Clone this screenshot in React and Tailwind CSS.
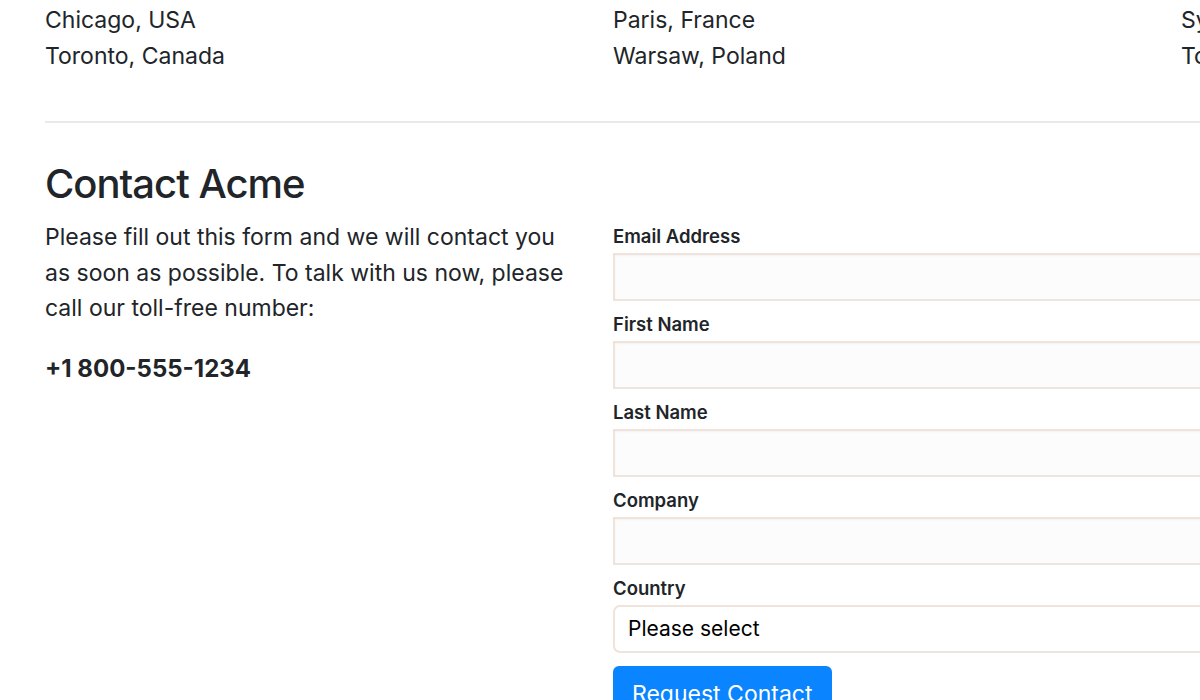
const offices = [
  ["Chicago, USA", "Toronto, Canada"],
  ["Paris, France", "Warsaw, Poland"],
  ["Sydney, Australia", "Tokyo, Japan"],
];

const fields = ["Email Address", "First Name", "Last Name", "Company"];

export default function App() {
  return (
    <div
      className="w-[1200px] h-[700px] overflow-hidden bg-white text-[#212529]"
      style={{ fontFamily: "Inter, 'Liberation Sans', sans-serif" }}
    >
      <div className="w-[1800px] pl-[45px]">
        <div className="flex">
          {offices.map((col, i) => (
            <div key={i} className="w-[568px] shrink-0 pt-[2px] text-[23px] leading-[36px]">
              {col.map((city) => (
                <div key={city}>{city}</div>
              ))}
            </div>
          ))}
        </div>

        <hr className="mt-[47px] w-[1700px] border-t-2 border-[#e9e9e9]" />

        <div className="flex pt-[37px]">
          <div className="w-[568px] shrink-0 pr-[36px]">
            <h2 className="text-[40px] leading-[48px] font-medium tracking-[-0.025em] mb-[12px]">Contact Acme</h2>
            <p className="text-[23px] leading-[35.5px] mb-[24px]">
              Please fill out this form and we will contact you as soon as possible. To talk with us now, please
              call our toll-free number:
            </p>
            <p className="text-[24px] leading-[36px] font-bold">+1 800-555-1234</p>
          </div>

          <form className="w-[900px] shrink-0 pt-[64px]">
            {fields.map((label) => (
              <div key={label} className="mb-[11px]">
                <label className="block text-[18.5px] leading-[24px] font-semibold mb-[5px]">{label}</label>
                <input
                  type="text"
                  className="block w-full h-[48px] border-2 border-[#f0e3db] bg-[#fdfcfc] shadow-[inset_0_1px_2px_rgba(0,0,0,0.04)] outline-none"
                />
              </div>
            ))}
            <div className="mb-[13px]">
              <label className="block text-[18.5px] leading-[24px] font-semibold mb-[5px]">Country</label>
              <div className="flex items-center h-[48px] border-2 border-[#f0e3db] rounded-[7px] bg-white pl-[13px] text-[21px] text-black">
                Please select
              </div>
            </div>
            <button
              type="button"
              className="h-[56px] px-[19px] rounded-[6px] bg-[#0a84ff] text-white text-[23px]"
            >
              Request Contact
            </button>
          </form>
        </div>
      </div>
    </div>
  );
}
